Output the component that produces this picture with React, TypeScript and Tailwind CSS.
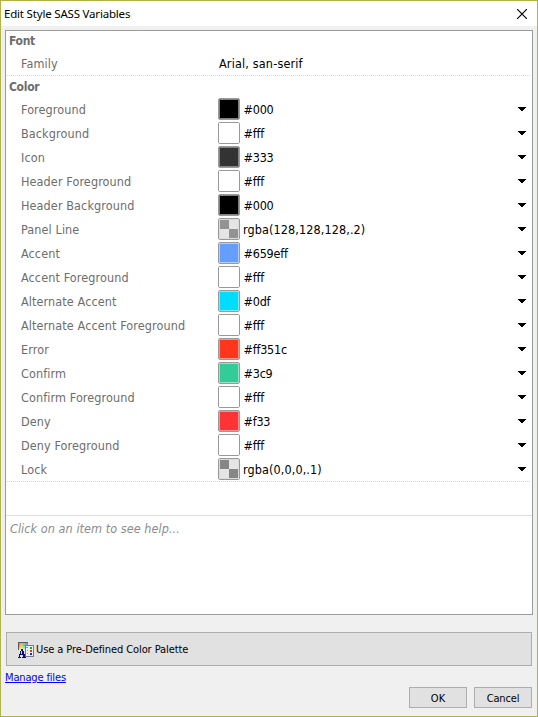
type Item = {
  label: string;
  value: string;
  fill: string;
  edge: string;
};

const items: Item[] = [
  { label: 'Foreground', value: '#000', fill: 'bg-black', edge: 'border-[#808080]' },
  { label: 'Background', value: '#fff', fill: 'bg-white', edge: 'border-white' },
  { label: 'Icon', value: '#333', fill: 'bg-[#333]', edge: 'border-[#858585]' },
  { label: 'Header Foreground', value: '#fff', fill: 'bg-white', edge: 'border-white' },
  { label: 'Header Background', value: '#000', fill: 'bg-black', edge: 'border-[#808080]' },
  { label: 'Panel Line', value: 'rgba(128,128,128,.2)', fill: 'bg-[#939393]', edge: 'border-[#dcdcdc]' },
  { label: 'Accent', value: '#659eff', fill: 'bg-[#659eff]', edge: 'border-[#b5cefa]' },
  { label: 'Accent Foreground', value: '#fff', fill: 'bg-white', edge: 'border-white' },
  { label: 'Alternate Accent', value: '#0df', fill: 'bg-[#00ddff]', edge: 'border-[#88e6f4]' },
  { label: 'Alternate Accent Foreground', value: '#fff', fill: 'bg-white', edge: 'border-white' },
  { label: 'Error', value: '#ff351c', fill: 'bg-[#ff351c]', edge: 'border-[#f5988c]' },
  { label: 'Confirm', value: '#3c9', fill: 'bg-[#33cc99]', edge: 'border-[#a0dfc9]' },
  { label: 'Confirm Foreground', value: '#fff', fill: 'bg-white', edge: 'border-white' },
  { label: 'Deny', value: '#f33', fill: 'bg-[#ff3333]', edge: 'border-[#f59797]' },
  { label: 'Deny Foreground', value: '#fff', fill: 'bg-white', edge: 'border-white' },
  { label: 'Lock', value: 'rgba(0,0,0,.1)', fill: 'bg-[#868686]', edge: 'border-[#dcdcdc]' },
];

function Swatch({ item }: { item: Item }) {
  const checked = item.value.startsWith('rgba');
  return (
    <div className="h-[22px] w-[22px] shrink-0 rounded-[2px] border border-[#999]">
      <div className={`h-5 w-5 border ${item.edge}`}>
        {checked ? (
          <div className="grid h-[18px] w-[18px] grid-cols-2 grid-rows-2 bg-[#e5e5e5]">
            <div className={item.fill} />
            <div />
            <div />
            <div className={item.fill} />
          </div>
        ) : (
          <div className={`h-[18px] w-[18px] ${item.fill}`} />
        )}
      </div>
    </div>
  );
}

function Row({ item }: { item: Item }) {
  const checked = item.value.startsWith('rgba');
  return (
    <div className="flex h-6 items-center pr-[6px] pl-[15px] text-[12.5px]">
      <span className="w-[197px] shrink-0 pt-[2px] tracking-[0.11px] text-[#6d6d6d]">{item.label}</span>
      <Swatch item={item} />
      <span
        className={`grow pt-[2px] text-black ${checked ? 'pl-[3px] tracking-[0.11px]' : 'pl-[3.5px] tracking-[-0.22px]'}`}
      >
        {item.value}
      </span>
      <svg className="h-[5px] w-2 shrink-0" viewBox="0 0 8 5" shapeRendering="crispEdges">
        <path d="M0 0h8v1H7v1H6v1H5v1H3V3H2V2H1V1H0z" />
      </svg>
    </div>
  );
}

function Dots() {
  return (
    <div className="mx-px h-px bg-[repeating-linear-gradient(90deg,#d8d8d8_0px,#d8d8d8_1px,#fff_1px,#fff_2px)]" />
  );
}

function PaletteIcon() {
  return (
    <svg className="mt-[2px] h-4 w-4 shrink-0" viewBox="0 0 16 16" shapeRendering="crispEdges">
      <defs>
        <linearGradient id="hue">
          <stop offset="0" stopColor="#e33" />
          <stop offset=".3" stopColor="#fc4" />
          <stop offset=".55" stopColor="#6d6" />
          <stop offset=".8" stopColor="#4bd" />
          <stop offset="1" stopColor="#b5c" />
        </linearGradient>
        <linearGradient id="shade" x2="0" y2="1">
          <stop offset="0" stopColor="#444" stopOpacity=".5" />
          <stop offset=".35" stopColor="#fff" stopOpacity="0" />
          <stop offset="1" stopColor="#fff" stopOpacity=".9" />
        </linearGradient>
      </defs>
      <path d="M0 0h10v9H0z" fill="url(#hue)" />
      <path d="M0 0h10v9H0z" fill="url(#shade)" />
      <path d="M0 0h10v1H0zM0 0h1v8H0z" fill="#665563" />
      <path d="M7 3h9v12H7z" fill="#777b89" />
      <path d="M8 4h7v10H8z" fill="#eef0f5" />
      <path d="M8 5h2v1H8zM9 8h1v1H9zM9 11h1v1H9z" fill="#9498a6" />
      <path d="M12 5h2v2h-2z" fill="#0b0" />
      <path d="M12 8h2v2h-2z" fill="#f22" />
      <path d="M12 11h2v2h-2z" fill="#22e" />
      <path
        d="M3 7h2v2h1v3h1v3h1v1H4v-1h1v-2H2v2h1v1H0v-1h1v-3h1V9h1zM3 9v3h1V9z"
        fill="#0c0c78"
        fillRule="evenodd"
      />
    </svg>
  );
}

export default function App() {
  return (
    <div className="flex h-[717px] w-[538px] flex-col border border-[#b0b446] bg-[#f0f0f0] font-['DejaVu_Sans_Condensed','DejaVu_Sans',sans-serif] font-stretch-condensed">
      <header className="flex h-[25px] shrink-0 items-center justify-between bg-white pr-[10px] pl-[3px]">
        <span className="font-['Noto_Sans',sans-serif] text-[11.5px] font-normal tracking-[-0.19px] text-black font-stretch-normal">
          Edit Style SASS Variables
        </span>
        <svg className="h-[10px] w-[10px]" viewBox="0 0 10 10">
          <path d="M0 0 10 10M10 0 0 10" stroke="#000" strokeWidth="1.15" fill="none" />
        </svg>
      </header>

      <main className="mt-1 ml-1 h-[585px] w-[528px] shrink-0 border border-[#9b9b9b] bg-white">
        <h2 className="h-5 pl-[3px] text-[12px] leading-[21px] font-bold tracking-[-0.3px] text-[#6d6d6d]">Font</h2>
        <div className="flex h-6 items-center pt-[2px] pl-[15px] text-[12.5px]">
          <span className="w-[198px] tracking-[0.11px] text-[#6d6d6d]">Family</span>
          <span className="tracking-[0.17px] text-black">Arial, san-serif</span>
        </div>
        <Dots />
        <h2 className="h-[21px] pl-[3px] text-[12px] leading-[23px] font-bold tracking-[-0.3px] text-[#6d6d6d]">
          Color
        </h2>
        {items.map((item) => (
          <Row key={item.label} item={item} />
        ))}
        <Dots />
        <div className="mt-[33px] border-t border-[#dfdfdf] pt-[3px] pl-1 text-[12.5px] leading-5 tracking-[0.07px] text-[#8c8c8c] italic">
          Click on an item to see help...
        </div>
      </main>

      <button className="mt-[17px] ml-[5px] flex h-[34px] w-[526px] shrink-0 items-center border border-[#adadad] bg-[#e1e1e1] pl-[11px] text-[11px] text-black">
        <PaletteIcon />
        <span className="mt-[2px] ml-[2px] tracking-[-0.09px]">Use a Pre-Defined Color Palette</span>
      </button>

      <a className="mt-[3px] ml-1 h-4 w-fit text-[11px] leading-[18px] tracking-[-0.15px] text-[#0000ff] underline">
        Manage files
      </a>

      <div className="mt-[2px] mr-[5px] flex justify-end gap-[7px]">
        <button className="h-[21px] w-[58px] border border-[#adadad] bg-[#e1e1e1] text-[11px] leading-[21px]">OK</button>
        <button className="h-[21px] w-[58px] border border-[#adadad] bg-[#e1e1e1] text-[11px] leading-[21px] tracking-[-0.15px]">
          Cancel
        </button>
      </div>
    </div>
  );
}
